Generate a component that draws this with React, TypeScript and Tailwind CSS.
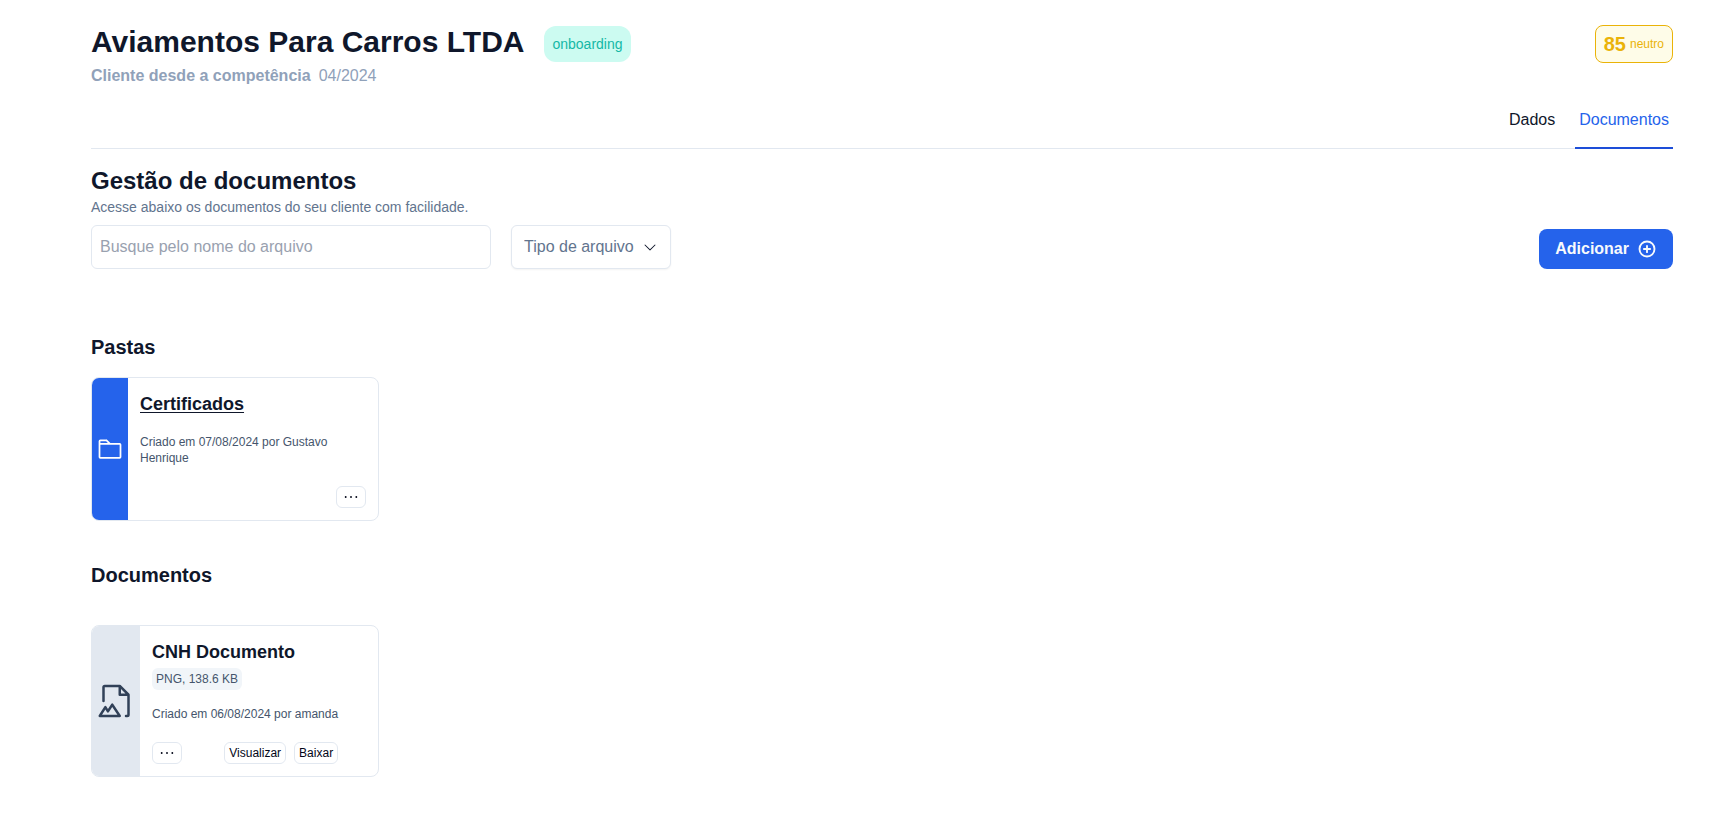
import { ReactNode } from "react";
import {
  PiCaretDown,
  PiDotsThree,
  PiFileImage,
  PiFolder,
  PiPlusCircleBold,
} from "react-icons/pi";

function Header() {
  return (
    <header className="flex items-start justify-between">
      <div>
        <div className="flex items-start gap-5">
          <h1 className="text-3xl leading-9 font-bold">Aviamentos Para Carros LTDA</h1>
          <span className="mt-0.5 flex h-9 items-center rounded-xl bg-[#ccfbf1] px-2 text-sm text-[#14b8a6]">
            onboarding
          </span>
        </div>
        <p className="mt-0.5 flex gap-2 text-base text-slate-400">
          <strong className="font-bold">Cliente desde a competência</strong>
          <span>04/2024</span>
        </p>
      </div>
      <div className="mt-px flex items-center gap-1 rounded-lg border border-[#eab308] bg-[#fefce8] px-2 py-1 text-[#eab308]">
        <span className="text-xl leading-7 font-bold">85</span>
        <span className="text-xs">neutro</span>
      </div>
    </header>
  );
}

function Tabs() {
  return (
    <nav className="mt-1 flex justify-end gap-4 border-b border-slate-200">
      <a href="#dados" className="-mb-px border-b-2 border-transparent px-1 pt-4 pb-[15px]">
        Dados
      </a>
      <a
        href="#documentos"
        aria-current="page"
        className="-mb-px border-b-2 border-[#1d4ed8] px-1 pt-4 pb-[15px] text-[#2563eb]"
      >
        Documentos
      </a>
    </nav>
  );
}

function Toolbar() {
  return (
    <div className="mt-2 flex items-end justify-between">
      <div className="flex gap-5">
        <input
          type="text"
          aria-label="Busque pelo nome do arquivo"
          placeholder="Busque pelo nome do arquivo"
          className="h-11 w-[400px] rounded-md border border-slate-200 px-2 placeholder:text-gray-400"
        />
        <div className="relative">
          <select
            aria-label="Tipo de arquivo"
            className="h-11 w-40 appearance-none rounded-md border border-slate-200 bg-white pl-3 text-slate-500 shadow-xs"
          >
            <option>Tipo de arquivo</option>
          </select>
          <PiCaretDown className="pointer-events-none absolute top-3.5 right-[13px] size-4" />
        </div>
      </div>
      <button
        type="button"
        className="flex h-10 items-center gap-2 rounded-lg bg-[#2563eb] px-4 font-bold text-slate-50"
      >
        Adicionar
        <PiPlusCircleBold className="size-5" />
      </button>
    </div>
  );
}

function CardButton({ children, label }: { children: ReactNode; label?: string }) {
  return (
    <button
      type="button"
      aria-label={label}
      className="flex h-[22px] items-center rounded-md border border-slate-200 bg-white px-1 text-xs text-slate-950"
    >
      {children}
    </button>
  );
}

function FolderCard() {
  return (
    <article className="mt-4 flex w-72 overflow-hidden rounded-lg border border-slate-200">
      <div className="flex shrink-0 items-center bg-[#2563eb] p-1 text-white">
        <PiFolder className="size-7" />
      </div>
      <div className="flex flex-1 flex-col items-start p-3">
        <a href="#certificados" className="text-lg leading-7 font-bold underline underline-offset-2">
          Certificados
        </a>
        <p className="mt-4 text-xs text-slate-600">Criado em 07/08/2024 por Gustavo Henrique</p>
        <div className="mt-5 self-end">
          <CardButton label="Mais opções">
            <PiDotsThree className="size-5" />
          </CardButton>
        </div>
      </div>
    </article>
  );
}

function DocumentCard() {
  return (
    <article className="mt-9 flex w-72 overflow-hidden rounded-lg border border-slate-200">
      <div className="flex shrink-0 items-center bg-slate-200 p-1 text-slate-700">
        <PiFileImage className="size-10" />
      </div>
      <div className="p-3">
        <h3 className="text-lg leading-7 font-bold">CNH Documento</h3>
        <span className="mt-0.5 flex h-[22px] w-fit items-center rounded-md bg-slate-100 px-1 text-xs text-slate-600">
          PNG, 138.6 KB
        </span>
        <p className="mt-4 text-xs text-slate-600">Criado em 06/08/2024 por amanda</p>
        <div className="mt-5 flex justify-between">
          <CardButton label="Mais opções">
            <PiDotsThree className="size-5" />
          </CardButton>
          <div className="flex gap-2">
            <CardButton>Visualizar</CardButton>
            <CardButton>Baixar</CardButton>
          </div>
        </div>
      </div>
    </article>
  );
}

export default function App() {
  return (
    <main className="min-h-screen bg-white pt-6 pr-[59px] pb-6 pl-[91px] font-['Liberation_Sans',Arial,sans-serif] text-base text-slate-900">
      <Header />
      <Tabs />
      <section className="mt-4">
        <h2 className="text-2xl leading-8 font-bold">Gestão de documentos</h2>
        <p className="text-sm text-slate-500">Acesse abaixo os documentos do seu cliente com facilidade.</p>
        <Toolbar />
      </section>
      <section className="mt-16">
        <h2 className="text-xl leading-7 font-bold">Pastas</h2>
        <FolderCard />
      </section>
      <section className="mt-10">
        <h2 className="text-xl leading-7 font-bold">Documentos</h2>
        <DocumentCard />
      </section>
    </main>
  );
}
